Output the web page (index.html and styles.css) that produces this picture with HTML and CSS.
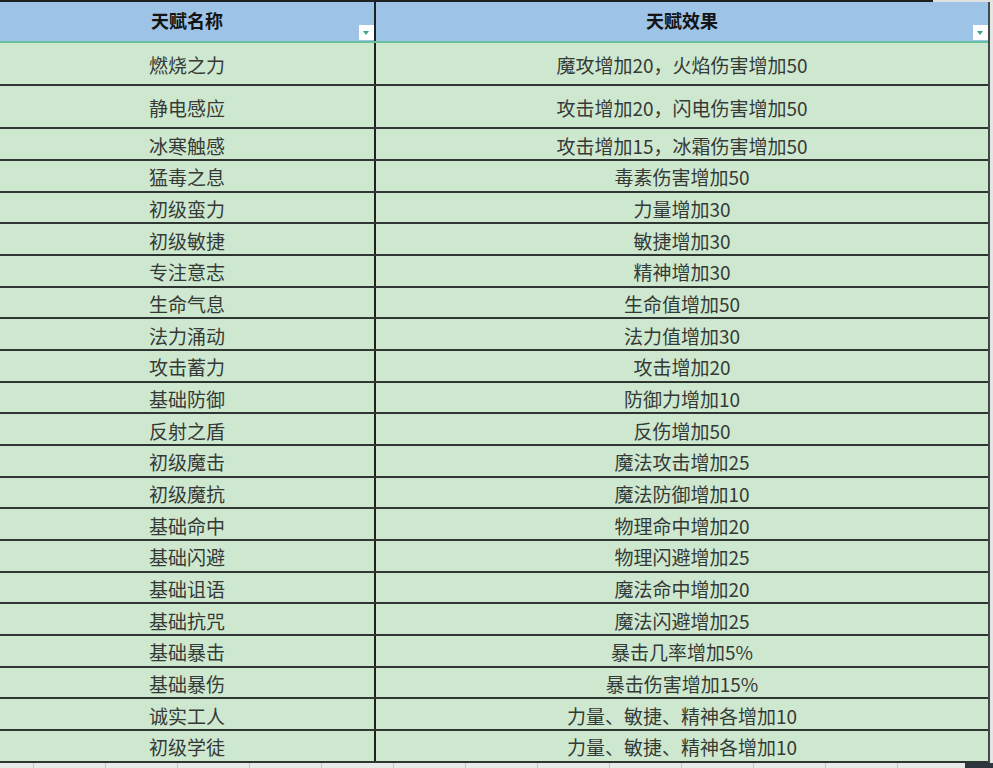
FILE: index.html
```html
<!DOCTYPE html>
<html lang="zh-CN">
<head>
<meta charset="utf-8">
<title>天赋表</title>
<link rel="stylesheet" href="styles.css">
</head>
<body>
<div class="topbar"><div class="topbar-dark"></div></div>
<div class="sheet">
  <div class="row head">
    <div class="cell c1">天赋名称<span class="filter"></span></div>
    <div class="cell c2">天赋效果<span class="filter"></span></div>
  </div>
  <div class="row tall"><div class="cell c1">燃烧之力</div><div class="cell c2">魔攻增加20，火焰伤害增加50</div></div>
  <div class="row tall"><div class="cell c1">静电感应</div><div class="cell c2">攻击增加20，闪电伤害增加50</div></div>
  <div class="row mid"><div class="cell c1">冰寒触感</div><div class="cell c2">攻击增加15，冰霜伤害增加50</div></div>
  <div class="row"><div class="cell c1">猛毒之息</div><div class="cell c2">毒素伤害增加50</div></div>
  <div class="row"><div class="cell c1">初级蛮力</div><div class="cell c2">力量增加30</div></div>
  <div class="row"><div class="cell c1">初级敏捷</div><div class="cell c2">敏捷增加30</div></div>
  <div class="row"><div class="cell c1">专注意志</div><div class="cell c2">精神增加30</div></div>
  <div class="row"><div class="cell c1">生命气息</div><div class="cell c2">生命值增加50</div></div>
  <div class="row"><div class="cell c1">法力涌动</div><div class="cell c2">法力值增加30</div></div>
  <div class="row"><div class="cell c1">攻击蓄力</div><div class="cell c2">攻击增加20</div></div>
  <div class="row"><div class="cell c1">基础防御</div><div class="cell c2">防御力增加10</div></div>
  <div class="row"><div class="cell c1">反射之盾</div><div class="cell c2">反伤增加50</div></div>
  <div class="row"><div class="cell c1">初级魔击</div><div class="cell c2">魔法攻击增加25</div></div>
  <div class="row"><div class="cell c1">初级魔抗</div><div class="cell c2">魔法防御增加10</div></div>
  <div class="row"><div class="cell c1">基础命中</div><div class="cell c2">物理命中增加20</div></div>
  <div class="row"><div class="cell c1">基础闪避</div><div class="cell c2">物理闪避增加25</div></div>
  <div class="row"><div class="cell c1">基础诅语</div><div class="cell c2">魔法命中增加20</div></div>
  <div class="row"><div class="cell c1">基础抗咒</div><div class="cell c2">魔法闪避增加25</div></div>
  <div class="row"><div class="cell c1">基础暴击</div><div class="cell c2">暴击几率增加5%</div></div>
  <div class="row"><div class="cell c1">基础暴伤</div><div class="cell c2">暴击伤害增加15%</div></div>
  <div class="row"><div class="cell c1">诚实工人</div><div class="cell c2">力量、敏捷、精神各增加10</div></div>
  <div class="row"><div class="cell c1">初级学徒</div><div class="cell c2">力量、敏捷、精神各增加10</div></div>
</div>
<div class="bottom"><div class="bottom-ticks"></div><div class="bottom-dark"></div></div>
</body>
</html>
```

FILE: styles.css
```css
* { box-sizing: border-box; }
html, body { margin: 0; padding: 0; }
body {
  width: 993px;
  height: 768px;
  overflow: hidden;
  background: #e4e6e5;
  font-family: "Noto Sans CJK SC", "Noto Sans", sans-serif;
}
.topbar {
  height: 2px;
  display: flex;
  background: #dfe1e0;
}
.topbar-dark {
  width: 933px;
  background: #1f2224;
}
.sheet {
  width: 990px;
  border-right: 2px solid #3e4a44;
  background: #cde8cf;
}
.row {
  display: flex;
  height: 31.68px;
  border-bottom: 2px solid #2f3532;
}
.row.tall { height: 43px; }
.row.mid { height: 32px; }
.row.head {
  height: 41px;
  background: #9dc3e6;
  border-bottom: 2px solid #66c09c;
}
.cell {
  position: relative;
  display: flex;
  align-items: center;
  justify-content: center;
  font-size: 19px;
  color: #363a37;
  line-height: 1;
  padding-top: 2px;
}
.c1 {
  width: 376px;
  border-right: 2px solid #1e2321;
}
.c2 {
  flex: 1;
}
.head .cell {
  font-weight: 700;
  color: #141414;
  font-size: 18px;
  padding-top: 0;
  padding-bottom: 4px;
}
.filter {
  position: absolute;
  right: 0;
  bottom: 1px;
  width: 15px;
  height: 15px;
  background: #ffffff;
}
.filter::after {
  content: "";
  position: absolute;
  left: 4px;
  top: 6px;
  border-left: 3.5px solid transparent;
  border-right: 3.5px solid transparent;
  border-top: 4px solid #3aa58a;
}
.bottom {
  height: 5px;
  display: flex;
  background: #e8eaea;
}
.bottom-ticks {
  flex: 1;
  background-image: repeating-linear-gradient(to right, transparent 0, transparent 33px, #c4c8c6 33px, #c4c8c6 34px, transparent 34px, transparent 72px);
}
.bottom-dark {
  width: 28px;
  background: #2d363c;
}
```
